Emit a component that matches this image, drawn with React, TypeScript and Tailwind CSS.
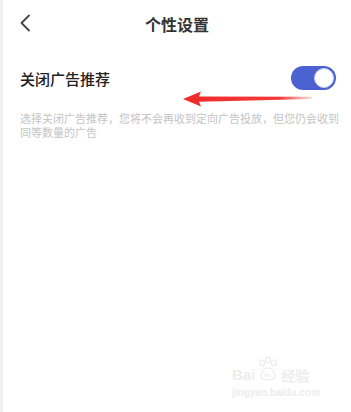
import React from "react";

export default function App() {
  return (
    <div
      className="relative w-[351px] h-[412px] bg-white overflow-hidden flex"
      style={{ fontFamily: '"Noto Sans CJK SC", "Noto Sans", sans-serif' }}
    >
      <div className="w-[3px] h-full bg-[#f0f0f0] shrink-0" />
      <div className="flex-1 flex flex-col">
        {/* header */}
        <div className="relative h-[48px] flex items-center justify-center">
          <svg
            className="absolute left-[16px] top-[14px]"
            width="12"
            height="18"
            viewBox="0 0 12 18"
            fill="none"
          >
            <path d="M10 1.5 L2.5 9 L10 16.5" stroke="#444" strokeWidth="1.8" strokeLinecap="round" strokeLinejoin="round" />
          </svg>
          <span className="text-[16px] font-bold text-[#333] leading-none">个性设置</span>
        </div>
        {/* row */}
        <div className="flex items-center justify-between pl-[17px] pr-[15px] mt-[18px] h-[24px]">
          <span className="text-[15px] font-medium text-[#222] leading-none">关闭广告推荐</span>
          <div className="w-[45px] h-[24px] rounded-full bg-[#4a63d1] flex items-center justify-end pr-[2px]">
            <div className="w-[20px] h-[20px] rounded-full bg-white border border-[#c8cff0]" />
          </div>
        </div>
        <div className="pl-[17px] pr-[10px] mt-[21px] text-[11px] leading-[14px] text-[#c4c4c4]">
          选择关闭广告推荐，您将不会再收到定向广告投放，但您仍会收到同等数量的广告
        </div>
      </div>

      {/* red arrow annotation */}
      <svg className="absolute left-[182px] top-[90px]" width="132" height="18" viewBox="0 0 132 18">
        <defs>
          <linearGradient id="fade" x1="0" x2="1" y1="0" y2="0">
            <stop offset="0" stopColor="#f02a2a" />
            <stop offset="0.75" stopColor="#f23a3a" />
            <stop offset="1" stopColor="#f23a3a" stopOpacity="0.15" />
          </linearGradient>
        </defs>
        <path d="M1 9 L19 1.5 L17 6.5 L130 6.8 L130 9 L17 11.8 L19 16.5 Z" fill="url(#fade)" />
      </svg>

      {/* watermark */}
      <div className="absolute left-[232px] top-[356px] flex flex-col items-start text-[#ededed]" style={{ fontFamily: '"Liberation Sans", sans-serif' }}>
        <div className="flex items-end gap-[1px]">
          <span className="text-[15px] font-bold leading-none">Bai</span>
          <svg width="24" height="26" viewBox="0 0 24 26" fill="none" stroke="#eaeaea" strokeWidth="1.2">
            <ellipse cx="6" cy="7" rx="2.5" ry="3" />
            <ellipse cx="12" cy="4" rx="2.5" ry="3" />
            <ellipse cx="18" cy="7" rx="2.5" ry="3" />
            <path d="M5 20 Q6 12 12 12 Q18 12 19 20 Q19 24 12 24 Q5 24 5 20 Z" />
            <text x="8" y="21" fontSize="6" fill="#eaeaea" stroke="none">du</text>
          </svg>
          <span className="text-[14px] leading-none font-bold" style={{ fontFamily: '"Noto Sans CJK SC", sans-serif' }}>经验</span>
        </div>
        <span className="text-[10px] leading-none mt-[6px] font-bold">jingyan.baidu.com</span>
      </div>
    </div>
  );
}
